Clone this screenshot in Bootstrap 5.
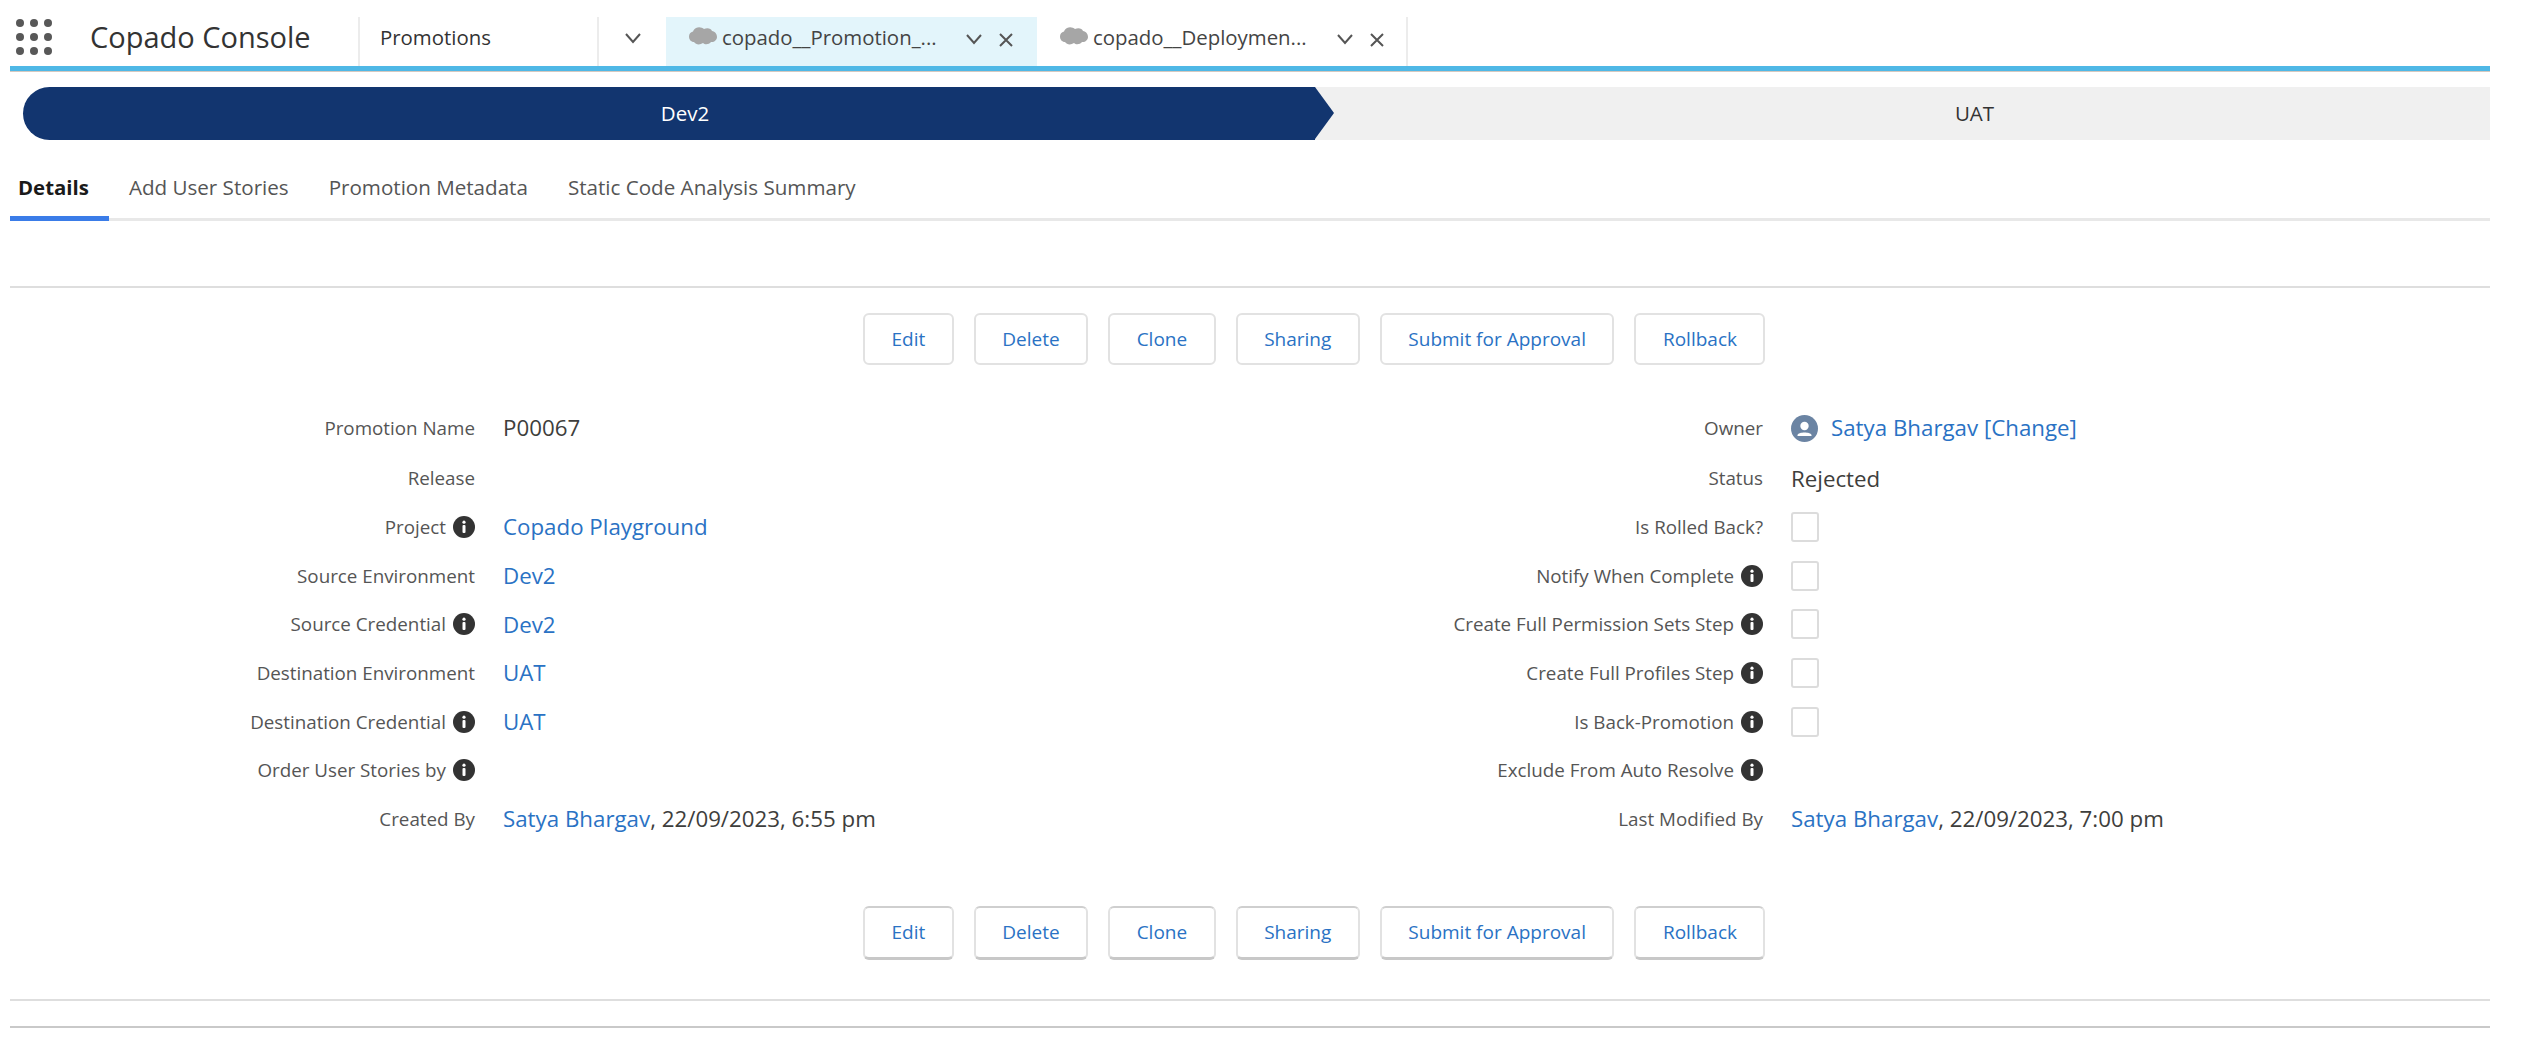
<!DOCTYPE html>
<html lang="en">
<head>
  <meta charset="UTF-8">
  <title>Copado Console - Promotions</title>
  <link href="https://cdn.jsdelivr.net/npm/bootstrap@5.3.6/dist/css/bootstrap.min.css" rel="stylesheet">
  <script src="https://cdn.jsdelivr.net/npm/bootstrap@5.3.6/dist/js/bootstrap.bundle.min.js"></script>
  <style>
    body {
      background: #fff;
      color: #3e3e3c;
      font-family: "Open Sans", "Noto Sans", sans-serif;
      margin: 0;
      padding: 0 43px 0 10px;
      overflow: hidden;
    }
    a { color: #2a72c4; text-decoration: none; }

    /* console header */
    .top-bar { height: 66px; padding-top: 17px; }
    .app-box { width: 350px; height: 49px; border-right: 2px solid #ececec; }
    .waffle { width: 36px; height: 36px; margin: 2px 0 0 6px; display: grid; grid-template-columns: repeat(3, 8px); gap: 6px; }
    .waffle i { width: 8px; height: 8px; border-radius: 50%; background: #585858; }
    .app-name { font-size: 29px; line-height: 40px; margin-left: 38px; color: #333; white-space: nowrap; }
    .obj-box { width: 239px; height: 49px; border-right: 2px solid #ececec; padding-left: 20px; font-size: 20.4px; line-height: 40px; color: #333; }
    .obj-more { width: 67px; padding: 15px 0 0 25px; }
    .work-tab { height: 49px; font-size: 20.4px; line-height: 40px; color: #444; white-space: nowrap; }
    .work-tab.is-active { width: 371px; background: #e3f5fb; padding-left: 23px; }
    .work-tab.is-other { width: 371px; border-right: 2px solid #ececec; padding-left: 23px; }
    .tab-title { width: 238px; padding-left: 5px; }
    .tab-cloud { margin-top: 10px; }
    .tab-chev { margin: 16px 15px 0 10px; }
    .tab-x { margin-top: 15px; }
    .blue-line { height: 6px; background: #4fb8e6; border-bottom: 1px solid #d5c9c0; }

    /* path */
    .stage-path { height: 53px; margin-top: 15px; font-size: 20.5px; line-height: 53px; text-align: center; }
    .stage-on { width: 1292px; margin-left: 13px; background: #12356f; color: #fff; border-radius: 27px 0 0 27px; padding-left: 32px; position: relative; }
    .stage-on::after {
      content: "";
      position: absolute;
      left: 100%;
      top: 0;
      border-left: 19px solid #12356f;
      border-top: 26.5px solid transparent;
      border-bottom: 26.5px solid transparent;
      z-index: 1;
    }
    .stage-off { flex: 1; background: #f0f0f0; color: #333; padding-left: 144px; }

    /* sub tabs */
    .sub-tabs { margin-top: 28px; height: 53px; border-bottom: 3px solid #e8e8e8; font-size: 20.6px; }
    .sub-tabs .nav-link { color: #555; padding: 6px 20px 0; height: 53px; line-height: 27px; }
    .sub-tabs .nav-link.active { color: #1a1a1a; font-size: 20.4px; font-weight: 700; padding-left: 8px; border-bottom: 5px solid #3a7ce8; }

    .sep { height: 2px; background: #dedede; }
    .sep-a { margin-top: 65px; }
    .act-bar { padding-left: 853px; gap: 20px; }
    .act-top { margin-top: 25px; }
    .act-low { margin-top: 62px; }
    .act-btn {
      height: 52px;
      padding: 0 26.5px;
      font-size: 19px;
      line-height: 48px;
      color: #2a72c4;
      background: #fff;
      border: 2px solid #e2e2e2;
      border-radius: 6px;
    }
    .act-low .act-btn { border-top-color: #cfcfcf; border-bottom: 3px solid #c8c8c8; height: 54px; }

    /* details */
    .fld-list { margin-top: 37px; }
    .fld-row { height: 48.7px; }
    .fld-row.first { height: 52px; }
    .fld { flex: 0 0 1288px; }
    .fld-label { width: 465px; font-size: 18.8px; color: #555; }
    .fld-value { margin-left: 28px; font-size: 22.3px; color: #3e3e3c; white-space: nowrap; }
    .info-dot { margin-left: 7px; flex: none; }
    .tick-box { width: 28px; height: 30px; border: 2px solid #dcdcdc; border-radius: 3px; display: block; }
    .owner-pic { margin-right: 13px; vertical-align: -6px; }

    .sep-b { margin-top: 39px; }
    .sep-c { margin-top: 25px; background: #c9c9c9; }
  </style>
</head>
<body>

  <svg width="0" height="0" class="d-block">
    <symbol id="ico-info" viewBox="0 0 22 22">
      <circle cx="11" cy="11" r="11" fill="#333"/>
      <circle cx="11" cy="6.2" r="1.6" fill="#fff"/>
      <rect x="9.5" y="9" width="3" height="8" rx="1" fill="#fff"/>
    </symbol>
    <symbol id="ico-chev" viewBox="0 0 18 12">
      <path d="M2 2 L9 10 L16 2" fill="none" stroke="#555" stroke-width="2"/>
    </symbol>
    <symbol id="ico-x" viewBox="0 0 16 16">
      <path d="M2 2 L14 14 M14 2 L2 14" fill="none" stroke="#555" stroke-width="2"/>
    </symbol>
    <symbol id="ico-cloud" viewBox="0 0 28 18">
      <path d="M7 1 C10 -.5 13 .5 15 2 C18 .5 22 1 23 4 C26 4.500 28 7 28 10 C28 13 25 15.500 22 15 C20 17.500 16 18 14 16 C11 18 7 18 5 15 C2 15 0 12.500 0 9.500 C0 7 1.500 5 4 4.500 C4.500 3 5.500 1.800 7 1 Z" fill="#a6a6a6"/>
    </symbol>
  </svg>

  <div class="top-bar d-flex">
    <div class="app-box d-flex">
      <div class="waffle">
        <i></i><i></i><i></i><i></i><i></i><i></i><i></i><i></i><i></i>
      </div>
      <div class="app-name">Copado Console</div>
    </div>
    <div class="obj-box">Promotions</div>
    <div class="obj-more"><svg class="d-block" width="18" height="12"><use href="#ico-chev"/></svg></div>
    <div class="work-tab is-active d-flex">
      <svg class="tab-cloud" width="28" height="18"><use href="#ico-cloud"/></svg>
      <span class="tab-title">copado__Promotion_...</span>
      <svg class="tab-chev" width="18" height="12"><use href="#ico-chev"/></svg>
      <svg class="tab-x" width="16" height="16"><use href="#ico-x"/></svg>
    </div>
    <div class="work-tab is-other d-flex">
      <svg class="tab-cloud" width="28" height="18"><use href="#ico-cloud"/></svg>
      <span class="tab-title">copado__Deploymen...</span>
      <svg class="tab-chev" width="18" height="12"><use href="#ico-chev"/></svg>
      <svg class="tab-x" width="16" height="16"><use href="#ico-x"/></svg>
    </div>
  </div>
  <div class="blue-line"></div>

  <div class="stage-path d-flex">
    <div class="stage-on">Dev2</div>
    <div class="stage-off">UAT</div>
  </div>

  <ul class="nav sub-tabs">
    <li class="nav-item"><a class="nav-link active" href="#">Details</a></li>
    <li class="nav-item"><a class="nav-link" href="#">Add User Stories</a></li>
    <li class="nav-item"><a class="nav-link" href="#">Promotion Metadata</a></li>
    <li class="nav-item"><a class="nav-link" href="#">Static Code Analysis Summary</a></li>
  </ul>

  <div class="sep sep-a"></div>

  <div class="act-bar act-top d-flex">
    <button class="btn act-btn">Edit</button>
    <button class="btn act-btn">Delete</button>
    <button class="btn act-btn">Clone</button>
    <button class="btn act-btn">Sharing</button>
    <button class="btn act-btn">Submit for Approval</button>
    <button class="btn act-btn">Rollback</button>
  </div>

  <div class="fld-list" id="fldList"></div>

  <div class="act-bar act-low d-flex">
    <button class="btn act-btn">Edit</button>
    <button class="btn act-btn">Delete</button>
    <button class="btn act-btn">Clone</button>
    <button class="btn act-btn">Sharing</button>
    <button class="btn act-btn">Submit for Approval</button>
    <button class="btn act-btn">Rollback</button>
  </div>

  <div class="sep sep-b"></div>
  <div class="sep sep-c"></div>

  <script>
    const box = '<span class="tick-box"></span>';
    const user = '<a href="#">Satya Bhargav</a>';
    const owner = '<svg class="owner-pic" width="27" height="27" viewBox="0 0 27 27"><circle cx="13.500" cy="13.500" r="13.500" fill="#6b84a3"/><circle cx="13.500" cy="11" r="4.200" fill="#fff"/><path d="M6.500 20 C7 16.500 20 16.500 20.500 20 L20.500 21 L6.500 21 Z" fill="#fff"/></svg><a href="#">Satya Bhargav [Change]</a>';

    // label, has help icon, value
    const filas = [
      [["Promotion Name", 0, "P00067"], ["Owner", 0, owner]],
      [["Release", 0, ""], ["Status", 0, "Rejected"]],
      [["Project", 1, '<a href="#">Copado Playground</a>'], ["Is Rolled Back?", 0, box]],
      [["Source Environment", 0, '<a href="#">Dev2</a>'], ["Notify When Complete", 1, box]],
      [["Source Credential", 1, '<a href="#">Dev2</a>'], ["Create Full Permission Sets Step", 1, box]],
      [["Destination Environment", 0, '<a href="#">UAT</a>'], ["Create Full Profiles Step", 1, box]],
      [["Destination Credential", 1, '<a href="#">UAT</a>'], ["Is Back-Promotion", 1, box]],
      [["Order User Stories by", 1, ""], ["Exclude From Auto Resolve", 1, ""]],
      [["Created By", 0, user + ", 22/09/2023, 6:55 pm"], ["Last Modified By", 0, user + ", 22/09/2023, 7:00 pm"]]
    ];

    function celda(c) {
      const info = c[1] ? '<svg class="info-dot" width="22" height="22"><use href="#ico-info"/></svg>' : "";
      return `<div class="fld d-flex align-items-center">
        <div class="fld-label d-flex align-items-center justify-content-end">${c[0]}${info}</div>
        <div class="fld-value d-flex align-items-center"><span>${c[2]}</span></div>
      </div>`;
    }

    document.getElementById("fldList").innerHTML = filas.map((f, i) =>
      `<div class="fld-row d-flex${i === 0 ? " first" : ""}">${celda(f[0])}${celda(f[1])}</div>`
    ).join("");
  </script>

</body>
</html>
